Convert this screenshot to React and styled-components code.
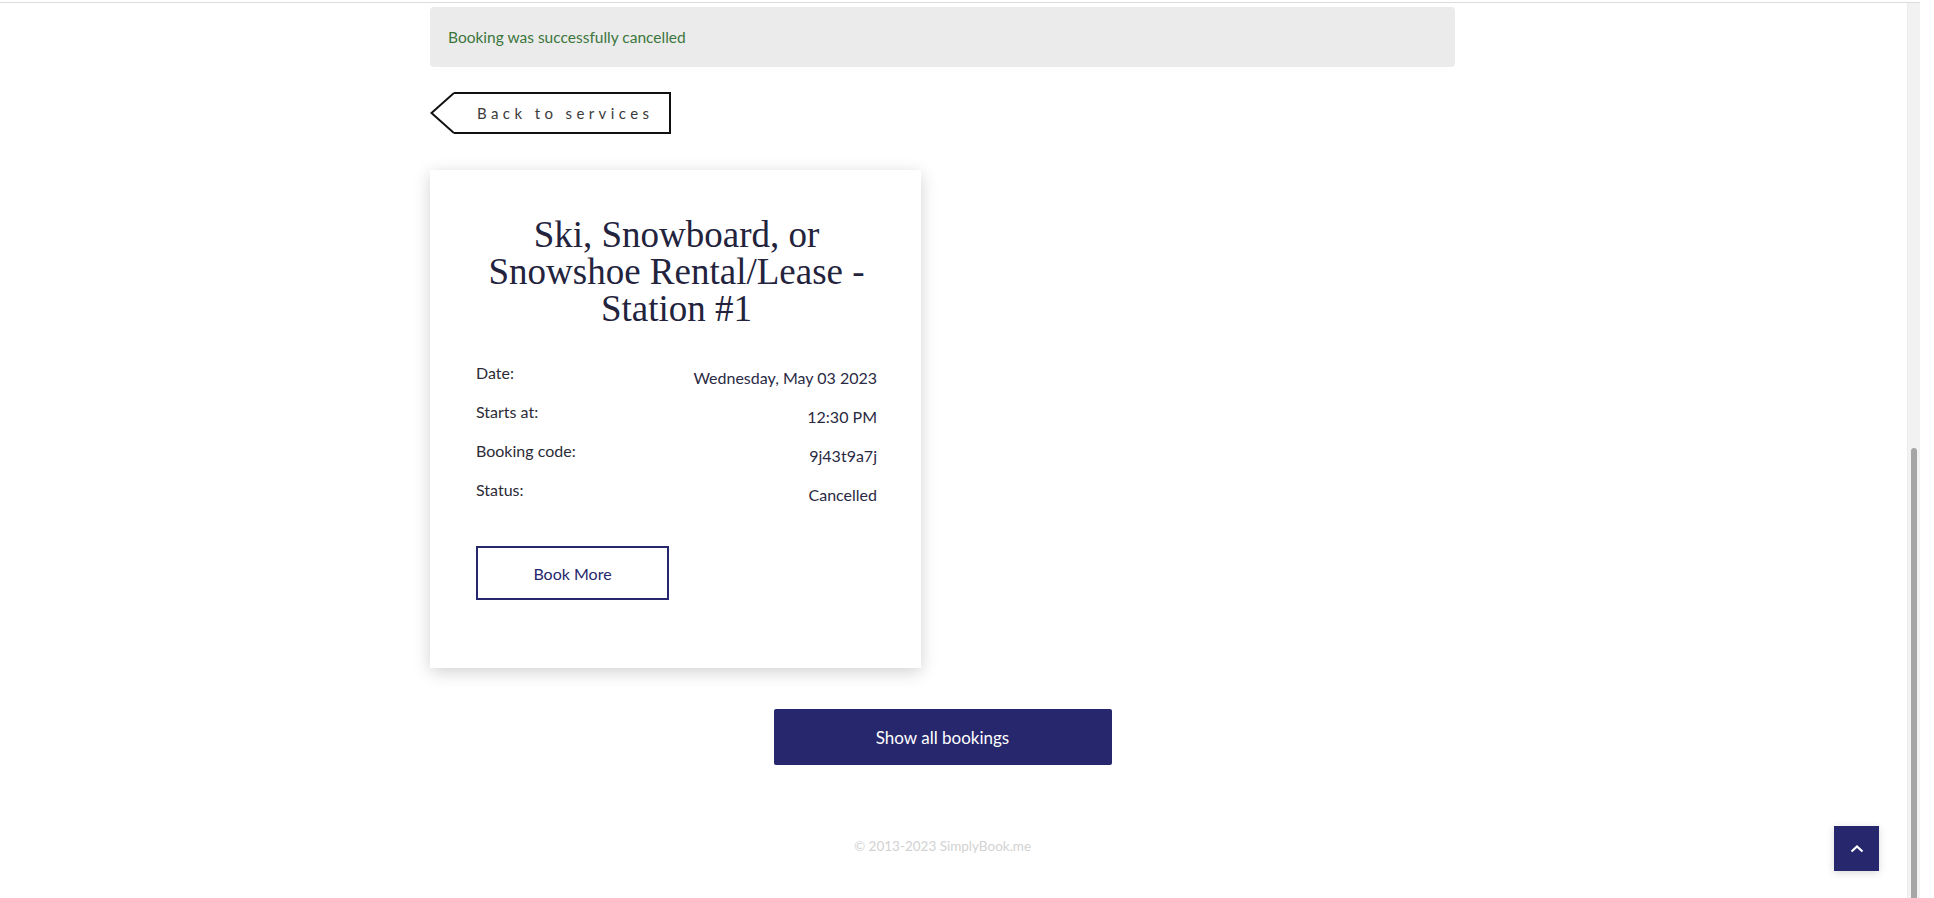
import React from "react";
import styled, { createGlobalStyle } from "styled-components";

const NAVY = "#27276d";

const GlobalStyle = createGlobalStyle`
  html, body { margin: 0; padding: 0; background: #ffffff; overflow: hidden; }
  body { font-family: "Lato", "Liberation Sans", sans-serif; color: #30303f; }
  * { box-sizing: border-box; }
`;

const TopRule = styled.div`
  width: 1920px;
  height: 3px;
  border-bottom: 1px solid #dcdcdc;
`;

const Page = styled.div`
  width: 1885px;
  padding-top: 4px;
`;

const Container = styled.div`
  width: 1025px;
  margin: 0 auto;
  display: flex;
  flex-direction: column;
  align-items: flex-start;
`;

const Alert = styled.div`
  align-self: stretch;
  height: 60px;
  background: #ebebeb;
  border-radius: 4px;
  padding: 0 18px 1px;
  display: flex;
  align-items: center;
  color: #3c763d;
  font-size: 15.5px;
`;

const BackButton = styled.a`
  margin-top: 25px;
  display: inline-flex;
  height: 42px;
  cursor: pointer;
  text-decoration: none;
  color: #333;
`;

const BackArrow = styled.svg`
  display: block;
  flex: none;
`;

const BackLabel = styled.span`
  display: flex;
  align-items: center;
  height: 42px;
  border: 2px solid #111;
  border-left: none;
  padding: 0 16px 0 23px;
  font-size: 15px;
  letter-spacing: 4.4px;
  color: #3a3a3a;
`;

const Card = styled.div`
  margin-top: 36px;
  width: 491px;
  padding: 46px 44px 68px 46px;
  background: #fff;
  box-shadow: 0 4px 16px rgba(0, 0, 0, 0.18);
`;

const Title = styled.h2`
  margin: 0;
  text-align: center;
  font-family: "Liberation Serif", "Times New Roman", serif;
  font-weight: 400;
  font-size: 37px;
  line-height: 37px;
  color: #23233d;
`;

const Details = styled.div`
  margin-top: 35px;
  display: flex;
  flex-direction: column;
  gap: 12px;
`;

const Row = styled.div`
  display: flex;
  justify-content: space-between;
  align-items: flex-start;
  font-size: 16px;
  line-height: 22px;
`;

const Label = styled.span`
  color: #2c2c38;
`;

const Value = styled.span`
  padding-top: 5px;
  text-align: right;
  color: #2a2a44;
`;

const OutlineButton = styled.button`
  margin-top: 40px;
  width: 193px;
  height: 54px;
  border: 2px solid ${NAVY};
  background: #fff;
  color: ${NAVY};
  font-family: inherit;
  font-size: 16px;
  cursor: pointer;
`;

const PrimaryButton = styled.button`
  align-self: center;
  margin-top: 41px;
  width: 338px;
  height: 56px;
  border: none;
  border-radius: 2px;
  background: ${NAVY};
  color: #fff;
  font-family: inherit;
  font-size: 17px;
  cursor: pointer;
`;

const Footer = styled.div`
  align-self: center;
  margin-top: 71px;
  color: #d2d2d2;
  font-size: 13.5px;
  line-height: 20px;
`;

const ScrollTop = styled.button`
  position: fixed;
  right: 55px;
  bottom: 27px;
  width: 45px;
  height: 45px;
  border: none;
  background: ${NAVY};
  box-shadow: 0 2px 8px rgba(0, 0, 0, 0.15);
  display: flex;
  align-items: center;
  justify-content: center;
  padding: 0;
  cursor: pointer;
`;

const ScrollTrack = styled.div`
  position: fixed;
  top: 3px;
  bottom: 0;
  left: 1907px;
  width: 13px;
  background: #f2f2f2;
  border-left: 1px solid #ececec;
`;

const ScrollThumb = styled.div`
  position: absolute;
  top: 445px;
  bottom: -20px;
  left: 3px;
  width: 6px;
  border-radius: 3px;
  background: #a6a6a6;
`;

const rows = [
  ["Date:", "Wednesday, May 03 2023"],
  ["Starts at:", "12:30 PM"],
  ["Booking code:", "9j43t9a7j"],
  ["Status:", "Cancelled"],
];

export default function App() {
  return (
    <>
      <GlobalStyle />
      <TopRule />
      <Page>
        <Container>
          <Alert>Booking was successfully cancelled</Alert>
          <BackButton>
            <BackArrow width="24" height="42" viewBox="0 0 24 42">
              <polyline
                points="24,1 1.5,21 24,41"
                fill="none"
                stroke="#111"
                strokeWidth="2"
              />
            </BackArrow>
            <BackLabel>Back to services</BackLabel>
          </BackButton>
          <Card>
            <Title>
              Ski, Snowboard, or
              <br />
              Snowshoe Rental/Lease -
              <br />
              Station #1
            </Title>
            <Details>
              {rows.map(([l, v]) => (
                <Row key={l}>
                  <Label>{l}</Label>
                  <Value>{v}</Value>
                </Row>
              ))}
            </Details>
            <OutlineButton>Book More</OutlineButton>
          </Card>
          <PrimaryButton>Show all bookings</PrimaryButton>
          <Footer>© 2013-2023 SimplyBook.me</Footer>
        </Container>
      </Page>
      <ScrollTop aria-label="Scroll to top">
        <svg width="14" height="9" viewBox="0 0 14 9">
          <polyline
            points="1.5,7.5 7,2.5 12.5,7.5"
            fill="none"
            stroke="#fff"
            strokeWidth="2.2"
          />
        </svg>
      </ScrollTop>
      <ScrollTrack>
        <ScrollThumb />
      </ScrollTrack>
    </>
  );
}
